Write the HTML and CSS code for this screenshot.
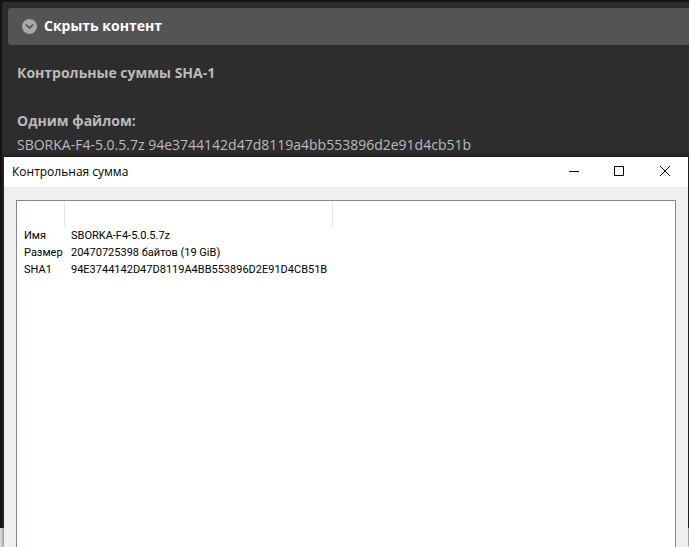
FILE: index.html
```
<!DOCTYPE html>
<html lang="ru">
<head>
    <meta charset="UTF-8">
    <meta name="viewport" content="width=device-width, initial-scale=1.0">
    <title>Контрольная сумма</title>
    <link rel="stylesheet" href="styles.css">
</head>
<body>
    <main class="page">
        <div class="spoiler">
            <button type="button" class="spoiler-header">
                <svg class="spoiler-icon" viewBox="0 0 15 15" aria-hidden="true">
                    <circle cx="7.5" cy="7.5" r="7.5" fill="#a8a8a8"/>
                    <path d="M4 5.5l3.5 3.5L11 5.5" fill="none" stroke="#505050" stroke-width="1.6"/>
                </svg>
                <span>Скрыть контент</span>
            </button>
            <div class="spoiler-body">
                <p><b>Контрольные суммы SHA-1</b></p>
                <p class="file"><b>Одним файлом:</b><br>SBORKA-F4-5.0.5.7z 94e3744142d47d8119a4bb553896d2e91d4cb51b</p>
            </div>
        </div>
    </main>
    <div class="taskbar"></div>

    <section class="window">
        <header class="titlebar">
            <h1>Контрольная сумма</h1>
            <div class="controls">
                <button type="button" aria-label="Свернуть">
                    <svg viewBox="0 0 11 11"><path d="M1 5.5h10"/></svg>
                </button>
                <button type="button" aria-label="Развернуть">
                    <svg viewBox="0 0 11 11"><path d="M.5 .5h9v9h-9z"/></svg>
                </button>
                <button type="button" aria-label="Закрыть">
                    <svg viewBox="0 0 11 11"><path d="M0 0l10 10M10 0L0 10"/></svg>
                </button>
            </div>
        </header>
        <div class="list">
            <table>
                <thead>
                    <tr>
                        <th class="col-name"></th>
                        <th class="col-value"></th>
                        <th></th>
                    </tr>
                </thead>
                <tbody>
                    <tr>
                        <td>Имя</td>
                        <td>SBORKA-F4-5.0.5.7z</td>
                        <td></td>
                    </tr>
                    <tr>
                        <td>Размер</td>
                        <td>20470725398 байтов (19 GiB)</td>
                        <td></td>
                    </tr>
                    <tr>
                        <td>SHA1</td>
                        <td>94E3744142D47D8119A4BB553896D2E91D4CB51B</td>
                        <td></td>
                    </tr>
                </tbody>
            </table>
        </div>
    </section>
</body>
</html>
```

FILE: styles.css
```
* {
    box-sizing: border-box;
    margin: 0;
    padding: 0;
}

body {
    display: flex;
    flex-direction: column;
    height: 100vh;
    overflow: hidden;
    background-color: #141414;
    font-family: "Open Sans", "Noto Sans", sans-serif;
}

button {
    border: none;
    background: none;
    font: inherit;
}

.page {
    flex: 1;
    padding: 2px 0 0 2px;
}

.spoiler {
    height: 100%;
    padding: 6px 0 0 6px;
    background-color: #2d2d2d;
    border-top-left-radius: 3px;
}

.spoiler-header {
    display: flex;
    align-items: center;
    gap: 7px;
    width: 100%;
    height: 37px;
    padding: 0 14px;
    background-color: #545454;
    border-radius: 3px 0 0 3px;
    color: #fff;
    font-size: 14px;
    font-weight: 700;
    line-height: 20px;
}

.spoiler-header span {
    padding-bottom: 2px;
}

.spoiler-icon {
    width: 15px;
    height: 15px;
}

.spoiler-body {
    padding: 16px 9px;
    color: #bbb;
    font-size: 14px;
    line-height: 24px;
}

.file {
    margin-top: 24px;
}

.taskbar {
    height: 19px;
    background-color: #dedede;
}

/* окно поверх страницы */
.window {
    position: absolute;
    top: 157px;
    right: 1px;
    bottom: 0;
    left: 4px;
    display: flex;
    flex-direction: column;
    background-color: #efefef;
    box-shadow: 0 0 4px rgba(0, 0, 0, 0.7);
    color: #000;
}

.titlebar {
    display: flex;
    justify-content: space-between;
    height: 30px;
    padding-left: 8px;
    background-color: #fff;
}

.titlebar h1 {
    font-size: 12px;
    font-weight: 400;
    line-height: 30px;
}

.controls {
    display: flex;
}

.controls button {
    display: flex;
    align-items: center;
    justify-content: center;
    width: 46px;
    height: 29px;
    padding-left: 1px;
}

.controls svg {
    width: 11px;
    height: 11px;
    fill: none;
    stroke: #000;
}

.list {
    flex: 1;
    margin: 13px 12px 0;
    padding-top: 1px;
    background-color: #fff;
    border: 1px solid #828790;
    border-bottom: none;
}

table {
    width: 100%;
    border-collapse: separate;
    border-spacing: 0;
    table-layout: fixed;
    font-family: Roboto, "Liberation Sans", sans-serif;
    font-size: 11px;
}

th {
    height: 25px;
    border-right: 1px solid #e5e5e5;
}

th:last-child {
    border-right: none;
}

.col-name {
    width: 48px;
}

.col-value {
    width: 268px;
}

td {
    height: 17px;
    padding-left: 6px;
    line-height: 17px;
    white-space: nowrap;
}

td:first-child {
    padding-left: 7px;
}
```
